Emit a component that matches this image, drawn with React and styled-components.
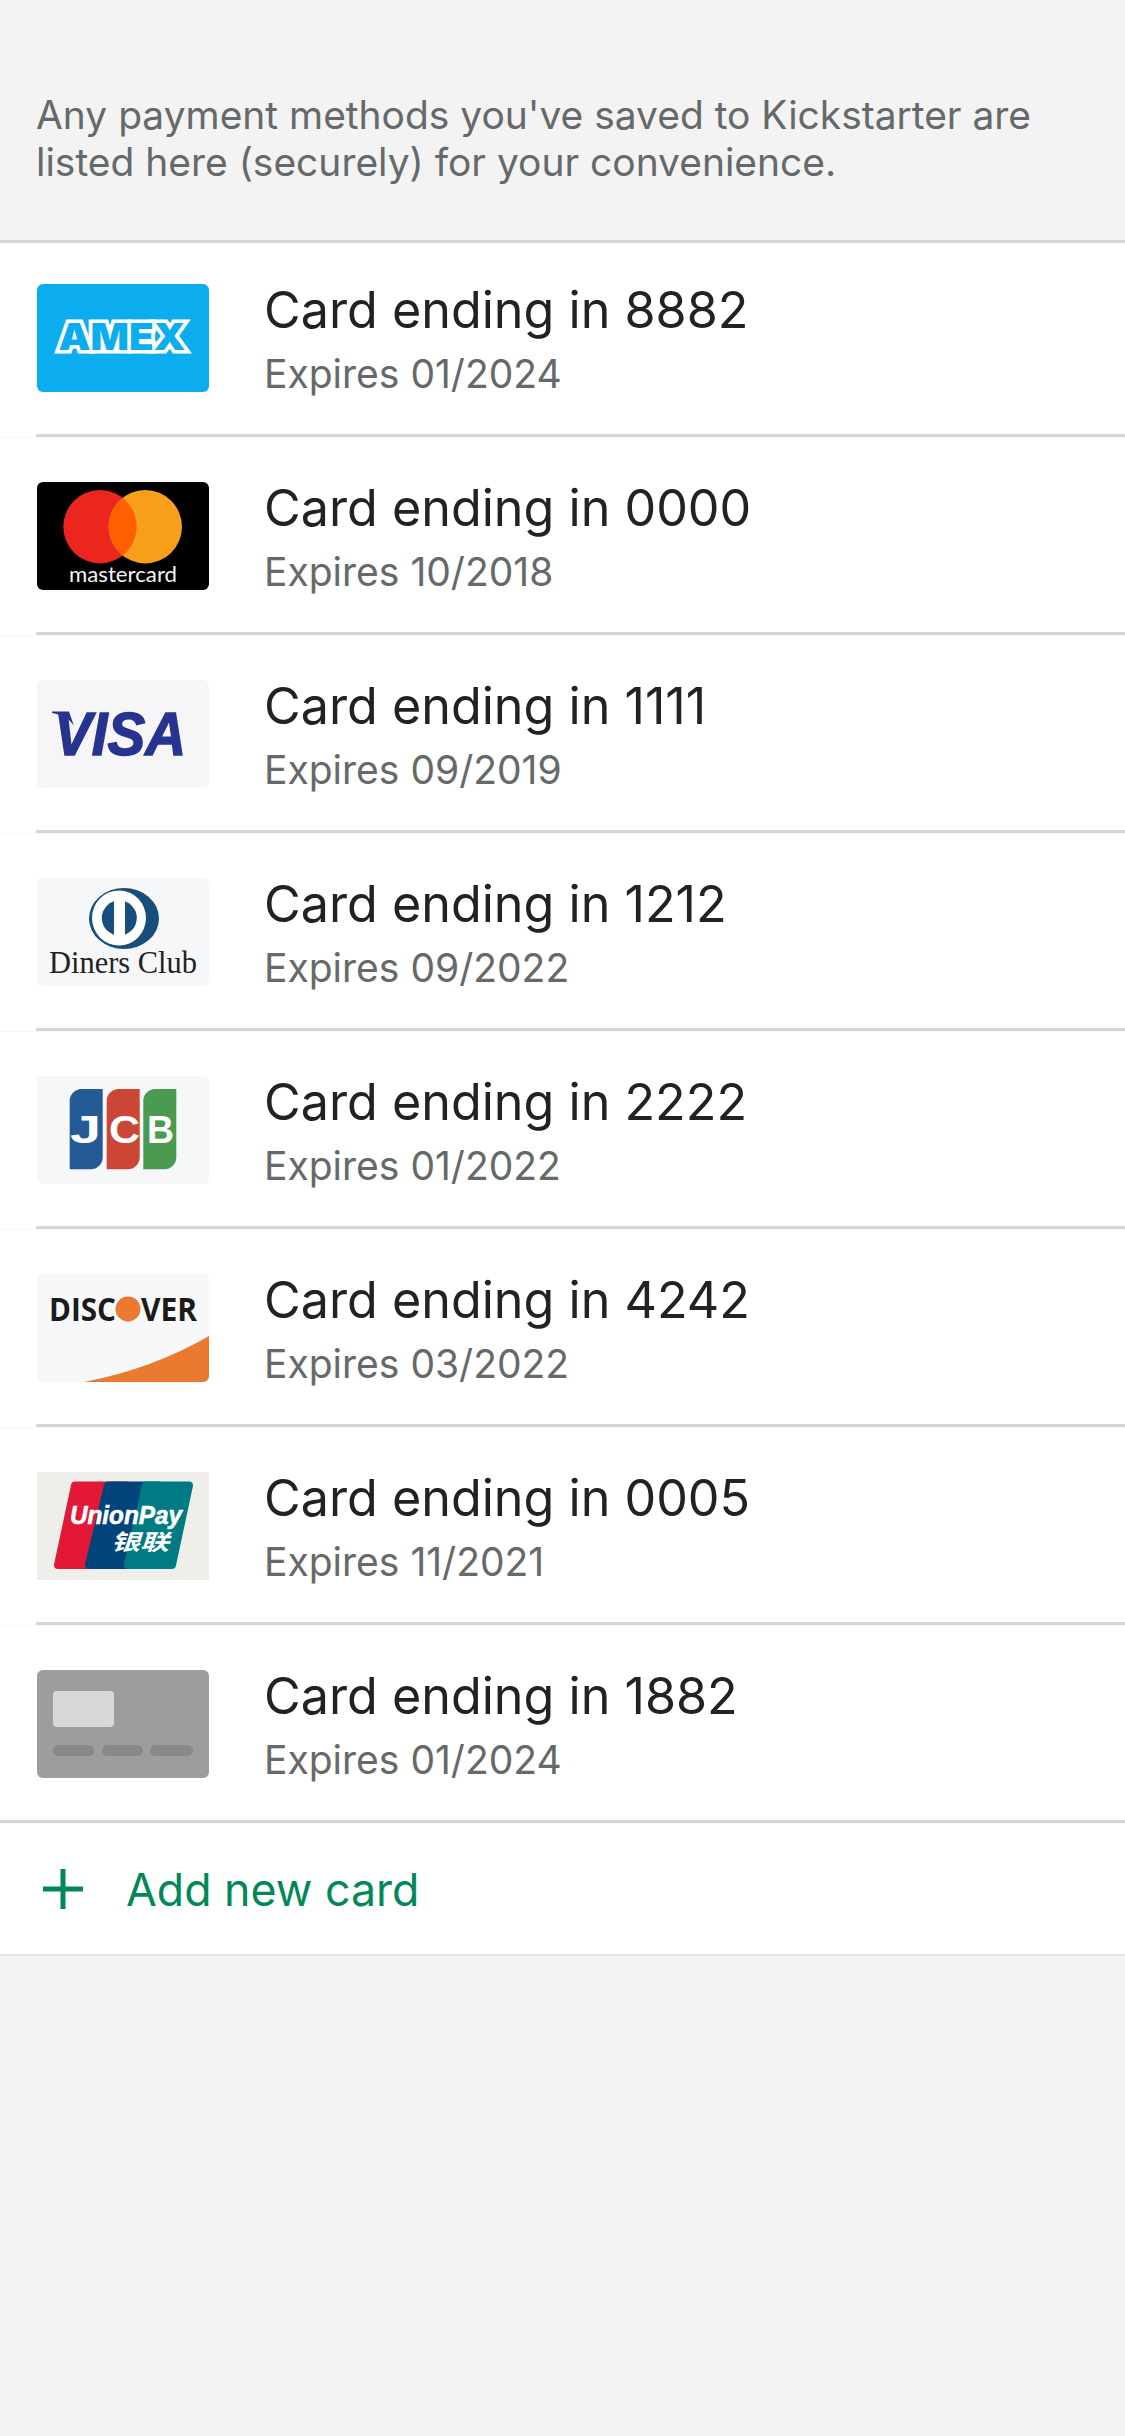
import React from "react";
import styled, { createGlobalStyle } from "styled-components";

const Global = createGlobalStyle`
  html, body { margin: 0; padding: 0; background: #f3f3f3; }
  body { font-family: Inter, "Liberation Sans", sans-serif; }
`;

const Page = styled.div`
  width: 1125px;
  min-height: 2436px;
  background: #f3f3f3;
`;
const Intro = styled.p`
  margin: 0;
  height: 243px;
  box-sizing: border-box;
  padding: 91px 36px 0;
  font-size: 38.95px;
  line-height: 47px;
  color: #656969;
  border-bottom: 3px solid #d6d6d6;
`;
const List = styled.ul`
  list-style: none;
  margin: 0;
  padding: 0;
  background: #fff;
`;
const Row = styled.li`
  background: #fff;
  border-bottom: 1px solid #f7f7f7;
`;
const RowBody = styled.div`
  display: flex;
  align-items: flex-start;
  box-sizing: border-box;
  padding: ${(p) => (p.$first ? 41 : 44)}px 0 42px 37px;
`;
const Divider = styled.div`
  height: 3px;
  background: #d6d6d6;
  margin-left: ${(p) => (p.$full ? 0 : 36)}px;
`;
const CardArt = styled.div`
  width: 172px;
  height: 108px;
  flex: none;
  overflow: hidden;
  border-radius: ${(p) => (p.$square ? 0 : 6)}px;
  background: ${(p) => p.$bg};
  svg { display: block; }
`;
const Texts = styled.div`
  margin-left: 55px;
  height: 108px;
  display: flex;
  flex-direction: column;
`;
const Title = styled.div`
  font-size: 50.25px;
  line-height: 56px;
  margin-top: -2px;
  color: #222222;
`;
const Sub = styled.div`
  font-size: 39px;
  line-height: 46px;
  margin-top: 13px;
  color: #656969;
`;
const AddRow = styled.div`
  display: flex;
  align-items: center;
  height: 132px;
  box-sizing: border-box;
  padding-left: 43px;
  background: #fff;
  border-bottom: 2px solid #e4e4e4;
`;
const AddLabel = styled.span`
  margin-left: 43px;
  padding-top: 2px;
  font-size: 44.7px;
  color: #028858;
`;

const Svg = ({ children }) => (
  <svg width="172" height="108" viewBox="0 0 172 108">{children}</svg>
);

const Amex = () => (
  <Svg>
    <text x="85" y="66" textAnchor="middle" textLength="127" lengthAdjust="spacingAndGlyphs"
      fontFamily="Inter" fontWeight="900" fontSize="37"
      fill="#0cadee" stroke="#fff" strokeWidth="7" strokeLinejoin="miter" paintOrder="stroke">AMEX</text>
  </Svg>
);
const Master = () => (
  <Svg>
    <circle cx="63" cy="44.7" r="36.7" fill="#eb261e" />
    <circle cx="108.3" cy="44.7" r="36.7" fill="#f79e1b" />
    <path d="M85.6 15.9a36.7 36.7 0 0 1 0 57.6a36.7 36.7 0 0 1 0-57.6z" fill="#ff5f00" />
    <text x="32" y="100" textLength="108" lengthAdjust="spacingAndGlyphs"
      fontFamily="Lato" fontSize="22" fill="#f4f4f4">mastercard</text>
  </Svg>
);
const Visa = () => (
  <Svg>
    <path d="M15 31.5H32L37 46C33 39 25 34.5 15 33Z" fill="#26348f" />
    <text x="17" y="75" textLength="132" lengthAdjust="spacingAndGlyphs"
      fontFamily="Liberation Sans" fontWeight="700" fontStyle="italic" fontSize="61"
      fill="#26348f" stroke="#26348f" strokeWidth="1.5">VISA</text>
  </Svg>
);
const Diners = () => (
  <Svg>
    <ellipse cx="87" cy="40.5" rx="35" ry="30.5" fill="#174e7c" />
    <ellipse cx="82" cy="40" rx="27" ry="27.5" fill="#fff" />
    <circle cx="82.3" cy="40" r="17.5" fill="#174e7c" />
    <rect x="77" y="20" width="11" height="40" fill="#fff" />
    <text x="12" y="95" textLength="148" lengthAdjust="spacingAndGlyphs"
      fontFamily="Liberation Serif" fontSize="31.5" fill="#222">Diners Club</text>
  </Svg>
);
const pillar = (x) =>
  `M${x + 12} 13H${x + 33}V81.3a12 12 0 0 1-12 12H${x}V25a12 12 0 0 1 12-12z`;
const Jcb = () => (
  <Svg>
    <path d={pillar(32.7)} fill="#245a96" />
    <path d={pillar(69.7)} fill="#cb4636" />
    <path d={pillar(106.3)} fill="#4a9a52" />
    <g fontFamily="Liberation Sans" fontWeight="700" fontSize="38" fill="#fff">
      <text x="33" y="66.5" textLength="31" lengthAdjust="spacingAndGlyphs">J</text>
      <text x="72" y="66.5" textLength="31" lengthAdjust="spacingAndGlyphs">C</text>
      <text x="110" y="66.5" textLength="27" lengthAdjust="spacingAndGlyphs">B</text>
    </g>
  </Svg>
);
const Discover = () => (
  <Svg>
    <g fontFamily="Open Sans" fontWeight="700" fontSize="32" fill="#1b1b1b">
      <text x="12" y="47" textLength="67" lengthAdjust="spacingAndGlyphs">DISC</text>
      <text x="104" y="47" textLength="56" lengthAdjust="spacingAndGlyphs">VER</text>
    </g>
    <circle cx="91" cy="35" r="12.5" fill="#e97a30" />
    <path d="M47 108Q115 95 172 62V108Z" fill="#e97a30" />
  </Svg>
);
const Union = () => (
  <Svg>
    <path d="M38 13.5H90L74 93H21Z" fill="#e21836" stroke="#e21836" strokeWidth="8" strokeLinejoin="round" />
    <path d="M71 13.5H122L105 93H52Z" fill="#00447c" stroke="#00447c" strokeWidth="8" strokeLinejoin="round" />
    <path d="M109 13.5H152L135 93H91Z" fill="#007b84" stroke="#007b84" strokeWidth="8" strokeLinejoin="round" />
    <text x="33" y="52" textLength="112" lengthAdjust="spacingAndGlyphs"
      fontFamily="Liberation Sans" fontWeight="700" fontStyle="italic" fontSize="26"
      fill="#fff" stroke="#fff" strokeWidth="0.6">UnionPay</text>
    <text x="74" y="78" textLength="58" lengthAdjust="spacingAndGlyphs"
      fontFamily="Noto Sans CJK SC" fontWeight="700" fontStyle="italic" fontSize="22" fill="#fff">银联</text>
  </Svg>
);
const Generic = () => (
  <Svg>
    <rect x="16" y="21" width="61" height="36" rx="4" fill="#d8d8d8" />
    <rect x="16" y="75" width="41" height="11" rx="5.5" fill="#888988" />
    <rect x="65" y="75" width="41" height="11" rx="5.5" fill="#888988" />
    <rect x="113" y="75" width="43" height="11" rx="5.5" fill="#888988" />
  </Svg>
);

const cards = [
  { art: Amex, bg: "#0cadee", num: "8882", exp: "01/2024" },
  { art: Master, bg: "#000", num: "0000", exp: "10/2018" },
  { art: Visa, bg: "#f6f6f9", num: "1111", exp: "09/2019" },
  { art: Diners, bg: "#f6f7f9", num: "1212", exp: "09/2022" },
  { art: Jcb, bg: "#f6f7f9", num: "2222", exp: "01/2022" },
  { art: Discover, bg: "#f7f8fa", num: "4242", exp: "03/2022" },
  { art: Union, bg: "#eeefeb", square: true, num: "0005", exp: "11/2021" },
  { art: Generic, bg: "#9c9d9c", num: "1882", exp: "01/2024" },
];

export default function App() {
  return (
    <Page>
      <Global />
      <Intro>
        Any payment methods you've saved to Kickstarter are
        <br />
        listed here (securely) for your convenience.
      </Intro>
      <List>
        {cards.map((c, i) => {
          const Art = c.art;
          return (
            <Row key={c.num + i}>
              <RowBody $first={i === 0}>
                <CardArt $bg={c.bg} $square={c.square}>
                  <Art />
                </CardArt>
                <Texts>
                  <Title>Card ending in {c.num}</Title>
                  <Sub>Expires {c.exp}</Sub>
                </Texts>
              </RowBody>
              <Divider $full={i === cards.length - 1} />
            </Row>
          );
        })}
      </List>
      <AddRow>
        <svg width="40" height="40" viewBox="0 0 40 40">
          <path d="M20 0V40M0 20H40" stroke="#028858" strokeWidth="5" fill="none" />
        </svg>
        <AddLabel>Add new card</AddLabel>
      </AddRow>
    </Page>
  );
}
